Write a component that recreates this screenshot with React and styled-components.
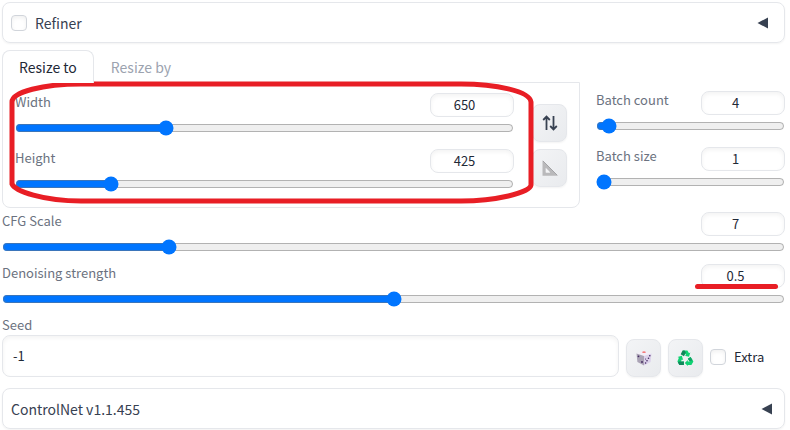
import React, { useState } from 'react';
import styled, { createGlobalStyle } from 'styled-components';

const GlobalStyle = createGlobalStyle`
  * {
    box-sizing: border-box;
  }
  body {
    margin: 0;
    background: #fff;
    color: #1f2937;
    font-family: "Noto Sans CJK SC", "Noto Sans", sans-serif;
    font-size: 13px;
    line-height: 18px;
  }
  button, input {
    font: inherit;
    color: inherit;
  }
`;

const Page = styled.main`
  padding: 2px 5px 1px 2px;
`;

const Accordion = styled.section`
  display: flex;
  align-items: center;
  justify-content: space-between;
  height: 41px;
  padding: 0 ${(props) => props.$end}px 0 8px;
  border: 1px solid #e5e7eb;
  border-radius: 8px;
  box-shadow: 0 1px 2px rgba(0, 0, 0, 0.05);
  color: #374151;
  font-size: 14px;
`;

const Toggle = styled.button`
  display: flex;
  padding: 0;
  border: none;
  background: none;
  cursor: pointer;
`;

const TitleToggle = styled(Toggle)`
  flex: 1;
  align-items: center;
  justify-content: space-between;
`;

const CheckLabel = styled.label`
  display: flex;
  align-items: center;
  gap: 8px;
`;

const Checkbox = styled.input`
  appearance: none;
  width: 16px;
  height: 16px;
  margin: 0;
  border: 1px solid #d1d5db;
  border-radius: 4px;
  background: #fff;
  box-shadow: inset 0 2px 4px rgba(0, 0, 0, 0.06);
  &:checked {
    background: #0075ff;
  }
`;

const Columns = styled.div`
  display: flex;
  gap: 16px;
  margin-top: 7px;
`;

const Resize = styled.div`
  flex: 1;
  min-width: 0;
`;

const TabList = styled.div`
  display: flex;
`;

const Tab = styled.button`
  height: 33px;
  margin-bottom: -1px;
  padding: 0 16px;
  border: 1px solid ${(props) => (props.$active ? '#e5e7eb' : 'transparent')};
  border-bottom: none;
  border-radius: 8px 8px 0 0;
  background: ${(props) => (props.$active ? '#fff' : 'transparent')};
  color: ${(props) => (props.$active ? '#1f2937' : '#9ca3af')};
  font-size: 14px;
  position: relative;
  z-index: 1;
  cursor: pointer;
`;

const TabPanel = styled.div`
  position: relative;
  z-index: ${(props) => (props.$raised ? 2 : 0)};
  display: flex;
  align-items: center;
  gap: 18px;
  padding: 10px 12px 15px;
  border: 1px solid #e5e7eb;
  border-radius: 0 0 8px 8px;
`;

const Highlight = styled.svg`
  position: absolute;
  z-index: 2;
  inset: 0 44px 0 0;
  width: calc(100% - 44px);
  height: 100%;
  overflow: visible;
  pointer-events: none;
`;

const Underline = styled.span`
  position: absolute;
  right: 7px;
  bottom: -1px;
  width: 83px;
  height: 5px;
  border-radius: 3px;
  background: #e81e25;
  pointer-events: none;
`;

const Stack = styled.div`
  display: flex;
  flex-direction: column;
  flex: 1;
  min-width: 0;
  gap: ${(props) => props.$gap}px;
`;

const BatchColumn = styled.div`
  flex: none;
  width: 189px;
  padding-top: 41px;
`;

const SliderBlock = styled.div`
  display: flex;
  flex-direction: column;
  gap: 3px;
`;

const SliderHead = styled.div`
  position: relative;
  display: flex;
  justify-content: space-between;
  align-items: flex-start;
`;

const Label = styled.label`
  color: #6b7280;
`;

const NumberInput = styled.input`
  width: 84px;
  height: 24px;
  padding: 0 8px 2px;
  border: 1px solid #e5e7eb;
  border-radius: 8px;
  background: #fff;
  box-shadow: inset 0 2px 4px rgba(0, 0, 0, 0.05);
  text-align: center;
`;

const Range = styled.input`
  width: 100%;
  height: 16px;
  margin: 0;
  accent-color: #0075ff;
`;

const Tools = styled.div`
  display: flex;
  flex-direction: column;
  gap: 7px;
  padding-top: 6px;
`;

const ToolButton = styled.button`
  display: flex;
  align-items: center;
  justify-content: center;
  width: 35px;
  height: 38px;
  padding: 0;
  border: 1px solid #e5e7eb;
  border-radius: 8px;
  background: linear-gradient(to bottom right, #f3f4f6, #e9ebee);
  box-shadow: 0 1px 2px rgba(0, 0, 0, 0.05);
  cursor: pointer;
`;

const Settings = styled.div`
  margin: 4px 0 9px;
`;

const SeedField = styled.div`
  display: flex;
  flex-direction: column;
  flex: 1;
  gap: 1px;
`;

const SeedRow = styled.div`
  display: flex;
  align-items: flex-end;
  gap: 7px;
  margin-bottom: 11px;
`;

const SeedInput = styled.input`
  width: 100%;
  height: 42px;
  padding: 0 10px 2px;
  border: 1px solid #e5e7eb;
  border-radius: 8px;
  box-shadow: inset 0 2px 4px rgba(0, 0, 0, 0.05);
`;

const Extra = styled(CheckLabel)`
  width: 75px;
  height: 38px;
  padding-bottom: 2px;
`;

const Arrow = () => (
  <svg width="12" height="12" viewBox="0 0 12 12" aria-hidden="true">
    <path d="M0.5 6 L11 0.5 V11.5 Z" fill="#374151" />
  </svg>
);

const SwapIcon = () => (
  <svg width="16" height="16" viewBox="0 0 16 16" fill="none" stroke="#374151" strokeWidth="1.8" aria-hidden="true">
    <path d="M4.5 15V1.8M1.2 5 4.5 1.6 7.8 5M11.5 1V14.2M8.2 11 11.5 14.4 14.8 11" />
  </svg>
);

const RulerIcon = () => (
  <svg width="16" height="16" viewBox="0 0 16 16" aria-hidden="true">
    <path d="M0.5 0.3 15.8 15.7H0.5ZM3.8 8V12.4H8.2Z" fill="#b9b9bb" fillRule="evenodd" />
    <path d="M3.8 8V12.4H8.2Z" fill="#f3f4f6" />
    <path d="M1 1 15.2 15.2" stroke="#a3a3a6" strokeWidth="1" />
  </svg>
);

const DiceIcon = () => (
  <svg width="16" height="16" viewBox="0 0 16 16" aria-hidden="true">
    <path d="M0.5 3.5 8 0.8 15.5 3.5 8 6Z" fill="#f3eef8" />
    <path d="M0.5 3.5 8 6V15.5L1.4 12Z" fill="#aaa3b5" />
    <path d="M8 6 15.5 3.5 14.6 12 8 15.5Z" fill="#dcd2eb" />
    <ellipse cx="8" cy="2.2" rx="1.8" ry="0.9" fill="#f47c7c" />
    <g fill="#40265f">
      <circle cx="2.5" cy="6.3" r="0.9" />
      <circle cx="6" cy="12" r="0.9" />
      <circle cx="13.8" cy="5.8" r="0.8" />
      <circle cx="12.5" cy="8.3" r="0.8" />
      <circle cx="11" cy="10.8" r="0.8" />
      <circle cx="9.6" cy="13" r="0.8" />
      <circle cx="9.6" cy="9" r="0.6" />
    </g>
  </svg>
);

const RecycleIcon = () => (
  <svg width="17" height="16" viewBox="0 0 17 16" aria-hidden="true">
    <path d="M5.6 0.6H10.4L12 3.2 13.3 2.5 12 6.8 7.8 5.8 9.1 5 8 3.2Z" fill="#0fd272" />
    <path d="M5.6 0.6H7.6L8.9 2.8 6.9 6.2 3.7 4.3Z" fill="#11875a" />
    <path d="M13.6 7 16.4 11.6 14.4 15H10.8V16L7.8 13 10.8 10V11.5H13L10.8 8.8Z" fill="#0fd272" />
    <path d="M13.6 7 15.6 10.3 12.6 11.6 10.8 8.8Z" fill="#11a566" />
    <path d="M0.6 7 4.8 5.8 6.2 10 4.9 9.4 3.9 11.5H7V15H2.4L0.4 11.6 1.9 7.8Z" fill="#0fd272" />
    <path d="M1.6 11.6H6.9V15H2.4L1 12.6Z" fill="#11875a" />
  </svg>
);

const Slider = ({ id, label, min, max, step = 1, initial, underlined }) => {
  const [value, setValue] = useState(initial);
  const shared = { min, max, step, value, onChange: (e) => setValue(e.target.value) };

  return (
    <SliderBlock>
      <SliderHead>
        <Label htmlFor={id}>{label}</Label>
        <NumberInput id={id} type="number" {...shared} />
        {underlined && <Underline />}
      </SliderHead>
      <Range type="range" aria-label={`${label} slider`} {...shared} />
    </SliderBlock>
  );
};

const App = () => {
  const [tab, setTab] = useState('to');
  const [seed, setSeed] = useState('-1');

  return (
    <Page>
      <GlobalStyle />
      <Accordion $end={15}>
        <CheckLabel>
          <Checkbox type="checkbox" />
          Refiner
        </CheckLabel>
        <Toggle aria-label="Expand Refiner"><Arrow /></Toggle>
      </Accordion>

      <Columns>
        <Resize>
          <TabList role="tablist">
            <Tab role="tab" aria-selected={tab === 'to'} $active={tab === 'to'} onClick={() => setTab('to')}>
              Resize to
            </Tab>
            <Tab role="tab" aria-selected={tab === 'by'} $active={tab === 'by'} onClick={() => setTab('by')}>
              Resize by
            </Tab>
          </TabList>
          <TabPanel role="tabpanel">
            <Stack $gap={13}>
              <Slider id="width" label="Width" min={64} max={2048} initial={650} />
              <Slider id="height" label="Height" min={64} max={2048} initial={425} />
            </Stack>
            <Tools>
              <ToolButton aria-label="Switch width and height"><SwapIcon /></ToolButton>
              <ToolButton aria-label="Detect size from image"><RulerIcon /></ToolButton>
            </Tools>
            <Highlight viewBox="0 0 532 124" preserveAspectRatio="none" aria-hidden="true">
              <path
                d="M9 19C9 9 40 1 78 1H458C492 1 527 8 528 19V102C527 110 492 118 458 118H78C40 118 12 108 9 101Z"
                fill="none"
                stroke="#e81e25"
                strokeWidth="5"
                vectorEffect="non-scaling-stroke"
              />
            </Highlight>
          </TabPanel>
        </Resize>
        <BatchColumn>
          <Stack $gap={13}>
            <Slider id="batch-count" label="Batch count" min={1} max={100} initial={4} />
            <Slider id="batch-size" label="Batch size" min={1} max={8} initial={1} />
          </Stack>
        </BatchColumn>
      </Columns>

      <Settings>
        <Stack $gap={9}>
          <Slider id="cfg" label="CFG Scale" min={1} max={30} initial={7} />
          <Slider id="denoising" label="Denoising strength" min={0} max={1} step={0.01} initial={0.5} underlined />
        </Stack>
      </Settings>

      <SeedRow>
        <SeedField>
          <Label htmlFor="seed">Seed</Label>
          <SeedInput id="seed" type="text" value={seed} onChange={(e) => setSeed(e.target.value)} />
        </SeedField>
        <ToolButton aria-label="Random seed" onClick={() => setSeed('-1')}><DiceIcon /></ToolButton>
        <ToolButton aria-label="Reuse last seed"><RecycleIcon /></ToolButton>
        <Extra>
          <Checkbox type="checkbox" />
          Extra
        </Extra>
      </SeedRow>

      <Accordion $end={11}>
        <TitleToggle>
          ControlNet v1.1.455
          <Arrow />
        </TitleToggle>
      </Accordion>
    </Page>
  );
};

export default App;
